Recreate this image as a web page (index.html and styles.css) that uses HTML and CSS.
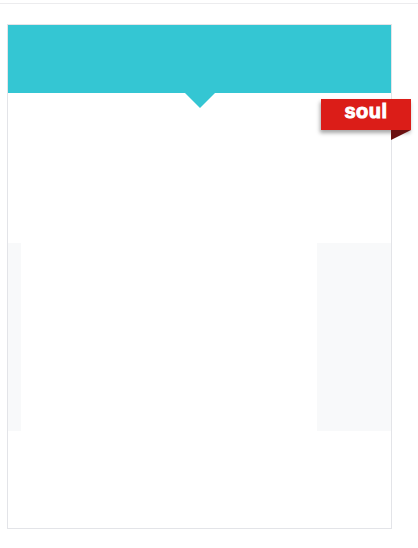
FILE: index.html
```html
<!DOCTYPE html>
<html>
<head>
<meta charset="utf-8">
<link rel="stylesheet" href="styles.css">
</head>
<body>
<div class="topbar"></div>
<div class="card">
  <div class="header"></div>
  <div class="ribbon">soul</div>
  <div class="content">
    <div class="carousel">
      <div class="slide side left"></div>
      <div class="slide main"></div>
      <div class="slide side right"></div>
    </div>
  </div>
</div>
</body>
</html>
```
FILE: styles.css
```css
html, body {
  margin: 0;
  padding: 0;
  background: #ffffff;
  font-family: "Liberation Sans", Arial, sans-serif;
}
.topbar {
  height: 3px;
  border-bottom: 1px solid #ececee;
}
.card {
  position: relative;
  box-sizing: border-box;
  width: 385px;
  height: 505px;
  margin: 20px 0 0 7px;
  border: 1px solid #e3e4e8;
  background: #fff;
}
.header {
  position: relative;
  height: 68px;
  background: #34c6d3;
}
.header::after {
  content: "";
  position: absolute;
  left: 177px;
  top: 68px;
  width: 0;
  height: 0;
  border-left: 15px solid transparent;
  border-right: 15px solid transparent;
  border-top: 15px solid #34c6d3;
}
.ribbon {
  position: absolute;
  top: 74px;
  left: 313px;
  width: 90px;
  height: 31px;
  background: #db1d18;
  color: #fff;
  font-family: "Liberation Sans", Arial, sans-serif;
  font-weight: bold;
  font-size: 20px;
  line-height: 24px;
  text-align: center;
  -webkit-text-stroke: 1px #fff;
  letter-spacing: 0.5px;
  box-shadow: -1px 3px 4px rgba(0, 0, 0, 0.35);
  z-index: 2;
}
.ribbon::after {
  content: "";
  position: absolute;
  left: 70px;
  top: 31px;
  width: 0;
  height: 0;
  border-top: 10px solid #6a1010;
  border-right: 20px solid transparent;
}
.content {
  padding-top: 150px;
}
.carousel {
  display: flex;
  height: 188px;
}
.slide {
  height: 100%;
}
.side {
  background: #f8f9fa;
}
.left {
  width: 13px;
}
.main {
  width: 296px;
  background: #fff;
}
.right {
  flex: 1;
}
```
